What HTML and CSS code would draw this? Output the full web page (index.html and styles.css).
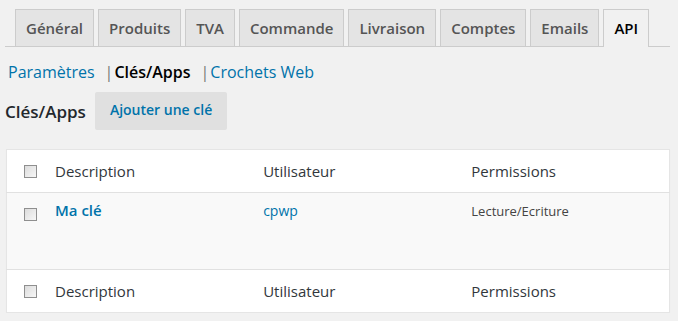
FILE: index.html
```html
<!DOCTYPE html>
<html lang="fr">
<head>
  <meta charset="UTF-8" />
  <title>API - Clés/Apps</title>
  <link rel="stylesheet" href="styles.css">
</head>
<body>
  <div class="wrap">
    <nav class="nav-tab-wrapper">
      <a class="nav-tab" href="#">Général</a>
      <a class="nav-tab" href="#">Produits</a>
      <a class="nav-tab" href="#">TVA</a>
      <a class="nav-tab" href="#">Commande</a>
      <a class="nav-tab" href="#">Livraison</a>
      <a class="nav-tab" href="#">Comptes</a>
      <a class="nav-tab" href="#">Emails</a>
      <a class="nav-tab nav-tab-active" href="#">API</a>
    </nav>

    <ul class="subsubsub">
      <li><a href="#">Paramètres</a><span class="sep">|</span></li>
      <li><a href="#" class="current">Clés/Apps</a><span class="sep">|</span></li>
      <li><a href="#">Crochets Web</a></li>
    </ul>

    <div class="heading">
      <h3>Clés/Apps</h3>
      <a class="button" href="#">Ajouter une clé</a>
    </div>

    <table class="widefat">
      <thead>
        <tr>
          <td class="check-column"><span class="cb"></span></td>
          <th>Description</th>
          <th>Utilisateur</th>
          <th>Permissions</th>
        </tr>
      </thead>
      <tbody>
        <tr>
          <td class="check-column"><span class="cb"></span></td>
          <td><a class="row-title" href="#">Ma clé</a></td>
          <td><a class="user" href="#">cpwp</a></td>
          <td class="perm">Lecture/Ecriture</td>
        </tr>
      </tbody>
      <tfoot>
        <tr>
          <td class="check-column"><span class="cb"></span></td>
          <th>Description</th>
          <th>Utilisateur</th>
          <th>Permissions</th>
        </tr>
      </tfoot>
    </table>
  </div>
</body>
</html>
```

FILE: styles.css
```css
body {
  margin: 0;
  background: #f1f1f1;
  font-family: "Open Sans", sans-serif;
  color: #444;
}
a {
  text-decoration: none;
  color: #0073aa;
}
.wrap {
  padding: 0 8px 0 5px;
}
.nav-tab-wrapper {
  display: flex;
  gap: 4px;
  padding: 9px 0 0 10px;
  border-bottom: 1px solid #ccc;
}
.nav-tab {
  display: block;
  padding: 0 10px;
  height: 36px;
  line-height: 37px;
  margin-bottom: -1px;
  border: 1px solid #ccc;
  border-bottom: none;
  background: #e4e4e4;
  color: #555;
  font-size: 15px;
  font-weight: 600;
}
.nav-tab-active {
  background: #f1f1f1;
  color: #000;
  height: 37px;
}
.subsubsub {
  list-style: none;
  margin: 0;
  padding: 13px 0 0 3px;
  display: flex;
  gap: 1px;
  font-size: 16px;
  line-height: 24px;
}
.subsubsub .sep {
  color: #777;
  margin-left: 10px;
}
.subsubsub .current {
  color: #000;
  font-weight: 600;
}
.heading {
  display: flex;
  align-items: center;
  margin-top: 8px;
}
.heading h3 {
  margin: 0 9px 0 0;
  font-size: 17px;
  font-weight: 600;
  color: #23282d;
}
.button {
  display: block;
  height: 38px;
  line-height: 36px;
  padding: 0 15px;
  background: #e0e0e0;
  border-radius: 2px;
  font-size: 14px;
  font-weight: 600;
}
.widefat {
  width: 664px;
  margin-top: 19px;
  margin-left: 1px;
  border-collapse: collapse;
  background: #fff;
  border: 1px solid #e5e5e5;
  box-shadow: 0 1px 1px rgba(0, 0, 0, 0.04);
  table-layout: fixed;
}
.widefat th,
.widefat td {
  text-align: left;
  padding: 0 10px;
  font-weight: normal;
  font-size: 15px;
  color: #32373c;
}
.widefat thead tr,
.widefat tfoot tr {
  height: 43px;
}
.widefat thead tr {
  border-bottom: 1px solid #e1e1e1;
}
.widefat tfoot tr {
  border-top: 1px solid #e1e1e1;
}
.widefat tbody tr {
  background: #f9f9f9;
  height: 77px;
}
.widefat tbody td {
  vertical-align: top;
  padding-top: 7px;
}
.widefat .check-column {
  width: 11px;
  padding: 0 10px 0 17px;
}
.widefat tbody .check-column {
  padding-top: 15px;
}
.cb {
  display: block;
  width: 11px;
  height: 11px;
  border: 1px solid #8f8f8f;
  background: linear-gradient(135deg, #dcdcdc, #f7f7f7);
}
.row-title {
  font-size: 15px;
  font-weight: 600;
}
.user {
  font-size: 14px;
}
.widefat tbody td.perm {
  font-size: 13px;
  padding-top: 9px;
  color: #444;
}
```
